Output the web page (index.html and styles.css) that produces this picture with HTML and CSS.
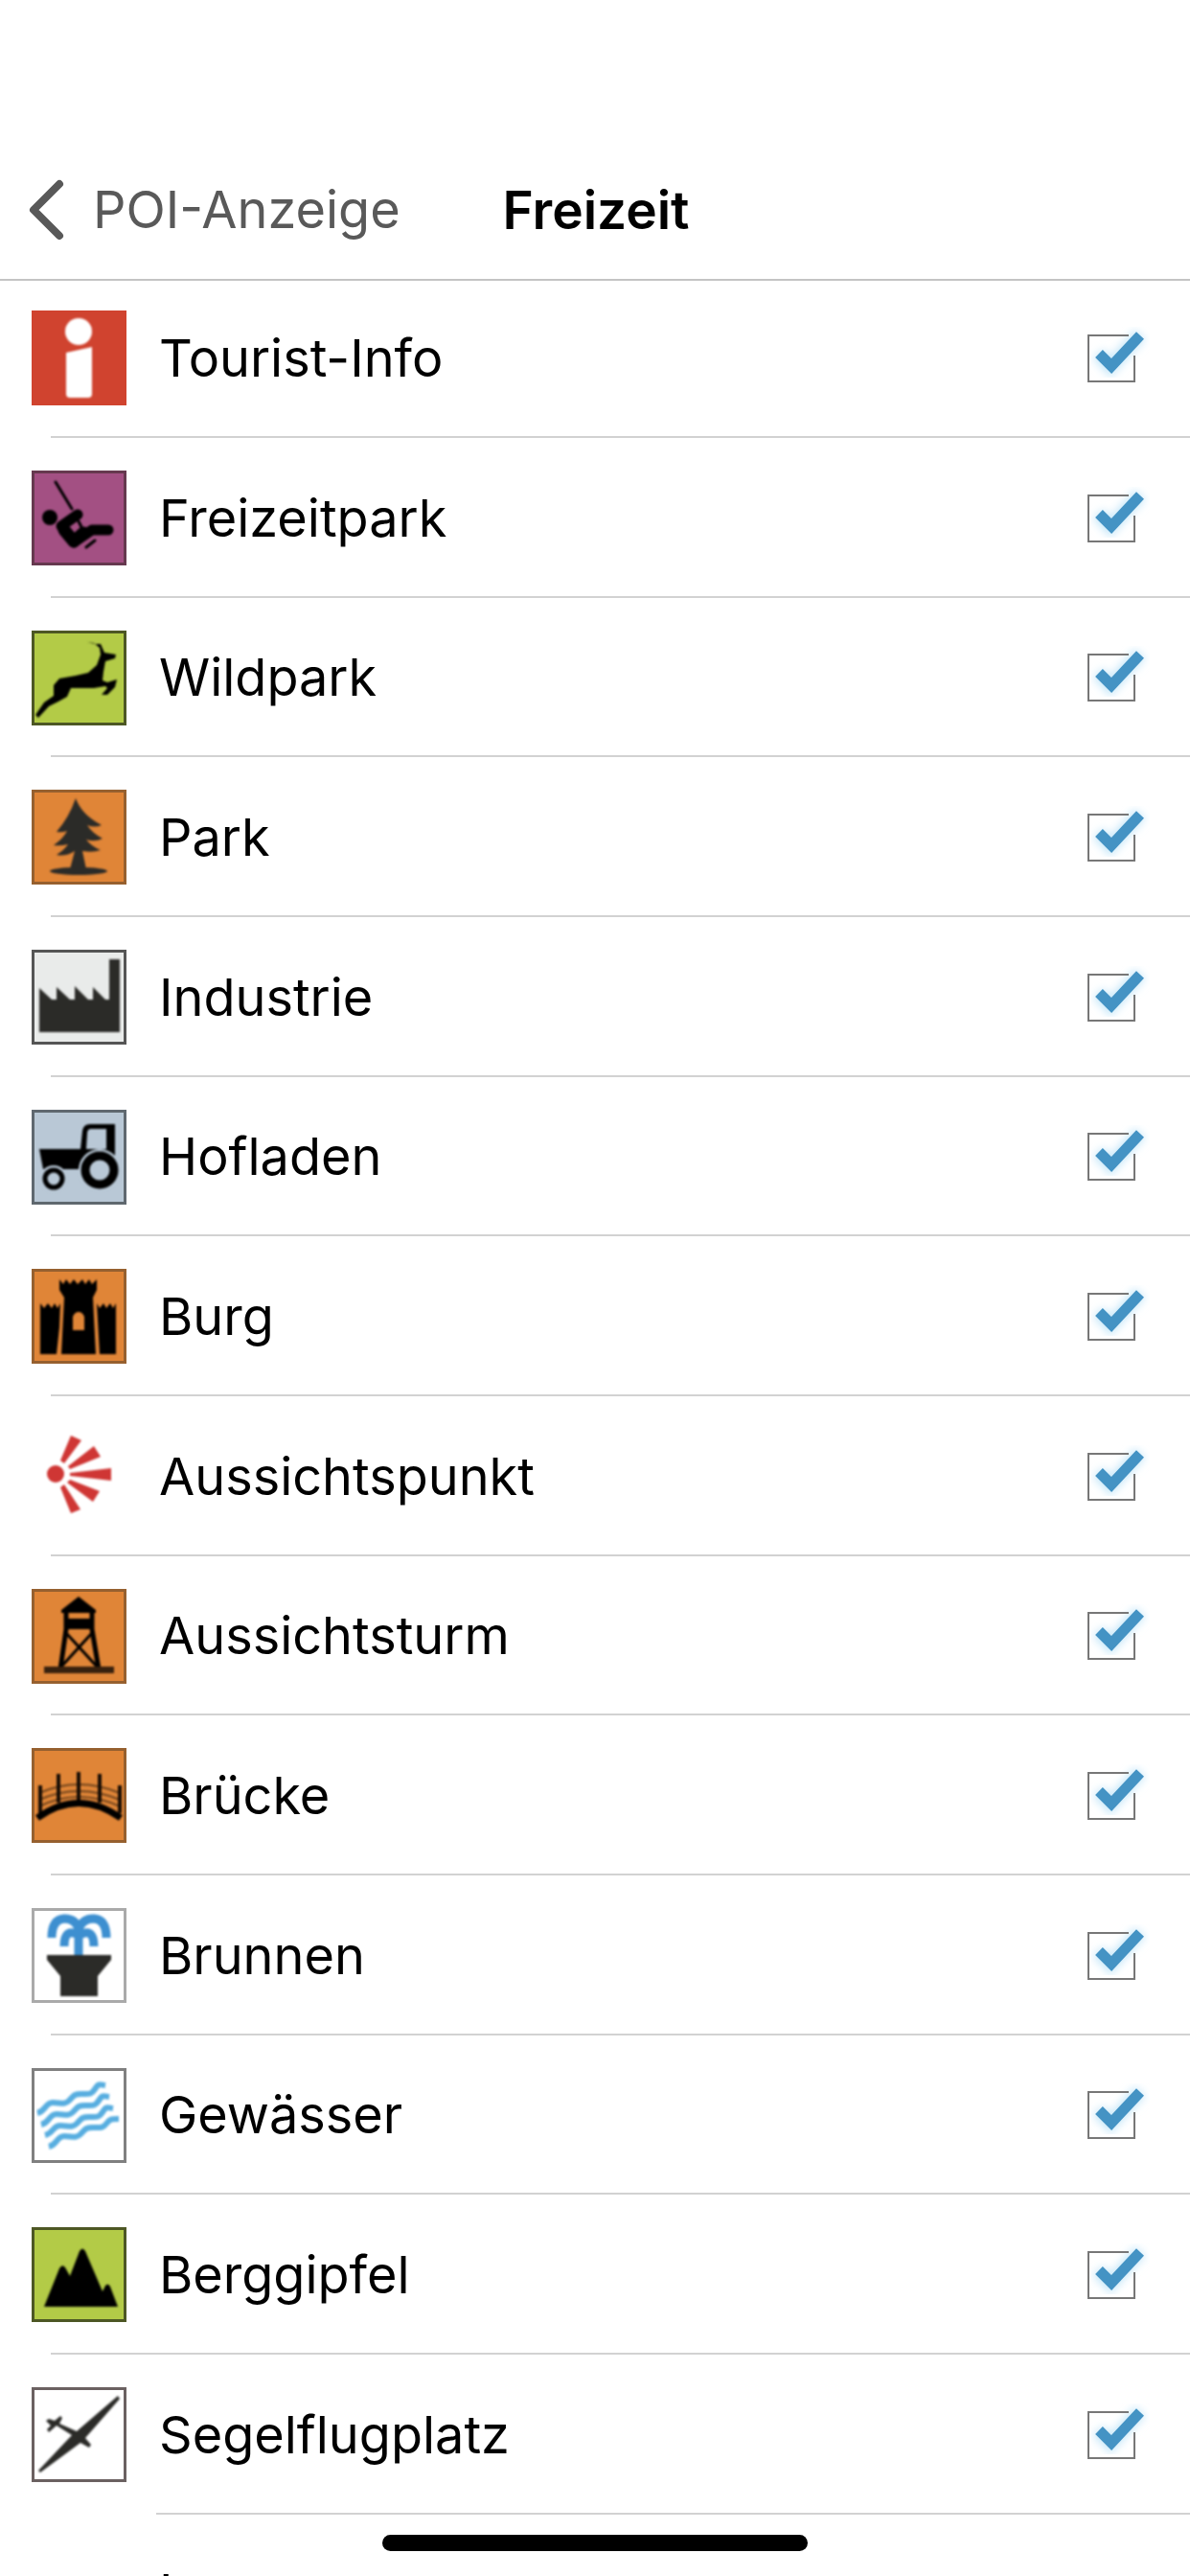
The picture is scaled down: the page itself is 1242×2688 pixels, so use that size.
FILE: index.html
```html
<!DOCTYPE html>
<html lang="de">
<head>
    <meta charset="UTF-8">
    <meta name="viewport" content="width=device-width, initial-scale=1.0">
    <title>Freizeit</title>
    <link rel="stylesheet" href="styles.css">
</head>
<body>
    <header class="navbar">
        <a class="back" href="#">
            <svg class="chevron" viewBox="0 0 37 64" aria-hidden="true"><path d="M32 5L5 32l27 27"/></svg>
            POI-Anzeige
        </a>
        <h1 class="title">Freizeit</h1>
    </header>

    <ul class="poi-list">
        <li class="poi">
            <svg class="icon" viewBox="0 0 99 99" aria-hidden="true">
                <rect width="99" height="99" fill="#d0432f"/>
                <g class="soft" fill="#fff"><circle cx="49" cy="22" r="14"/><path d="M36 44l27-6v49q0 4-4 4H40q-4 0-4-4z"/></g>
            </svg>
            <label for="tourist-info">Tourist-Info</label>
            <input type="checkbox" id="tourist-info" checked>
        </li>
        <li class="poi">
            <svg class="icon" viewBox="0 0 99 99" aria-hidden="true">
                <rect width="99" height="99" fill="#a35083"/>
                <rect class="frame" x="1" y="1" width="97" height="97" stroke="#66394f"/>
                <g class="soft" fill="none" stroke="#000" stroke-linecap="round" stroke-linejoin="round">
                    <path d="M25 12l17 28" stroke-width="3"/>
                    <circle cx="19" cy="49" r="8" fill="#000" stroke="none"/>
                    <path d="M48 46L31 58l13 17 19-13h17" stroke-width="11"/>
                    <path d="M34 62l10 12 10-9" stroke-width="13"/>
                    <path d="M49 53l3 6M57 80l9-7" stroke-width="3"/>
                </g>
            </svg>
            <label for="freizeitpark">Freizeitpark</label>
            <input type="checkbox" id="freizeitpark" checked>
        </li>
        <li class="poi">
            <svg class="icon" viewBox="0 0 99 99" aria-hidden="true">
                <rect width="99" height="99" fill="#b3cb47"/>
                <rect class="frame" x="1" y="1" width="97" height="97" stroke="#4d5724"/>
                <g class="soft"><path d="M58 12l8 2 6 0 4 9 12 2-1 4-10 3-2 11-1 9 5 2 10-3-2 8-8 8-6 0 6-7-2-2-12 2-24 0-4 9-9 5-10 5-11 12-3-3 9-13 10-7 0-11 6-7 17-3 13-3 9-8 4-11-1-7-6-5z"/></g>
            </svg>
            <label for="wildpark">Wildpark</label>
            <input type="checkbox" id="wildpark" checked>
        </li>
        <li class="poi">
            <svg class="icon" viewBox="0 0 99 99" aria-hidden="true">
                <rect width="99" height="99" fill="#e08537"/>
                <rect class="frame" x="1" y="1" width="97" height="97" stroke="#96602f"/>
                <g class="soft" fill="#2b2b28">
                    <path d="M46 9Q52 26 73 37Q66 40 58 37Q63 45 74 51Q66 55 57 52Q62 59 72 63Q64 66 53 64L57 83H40L45 64Q36 70 26 68Q34 63 38 57Q30 59 23 58Q33 51 37 43Q32 45 26 44Q39 29 46 9z"/>
                    <ellipse cx="49" cy="85" rx="30" ry="4"/>
                </g>
            </svg>
            <label for="park">Park</label>
            <input type="checkbox" id="park" checked>
        </li>
        <li class="poi">
            <svg class="icon" viewBox="0 0 99 99" aria-hidden="true">
                <rect width="99" height="99" fill="#e9ebea"/>
                <rect class="frame" x="1" y="1" width="97" height="97" stroke="#555"/>
                <g class="soft"><path fill="#2b2b28" d="M8 86V40l13 12h5V39l14 13h5V38l14 14h5V39l13 13h4V10h11v76z"/></g>
            </svg>
            <label for="industrie">Industrie</label>
            <input type="checkbox" id="industrie" checked>
        </li>
        <li class="poi">
            <svg class="icon" viewBox="0 0 99 99" aria-hidden="true">
                <rect width="99" height="99" fill="#b9c8d6"/>
                <rect class="frame" x="1" y="1" width="97" height="97" stroke="#5f686f"/>
                <g class="soft">
                    <path d="M8 41H51L53 22Q54 15 61 15H87V48L84 60 52 62H12zM57 41h21V20H62q-4 0-4 5z" fill-rule="evenodd"/>
                    <circle cx="23" cy="72" r="14" fill="#b9c8d6"/>
                    <circle cx="71" cy="63" r="22" fill="#b9c8d6"/>
                    <circle cx="23" cy="72" r="9" fill="none" stroke="#000" stroke-width="5"/>
                    <circle cx="71" cy="63" r="15" fill="none" stroke="#000" stroke-width="9"/>
                </g>
            </svg>
            <label for="hofladen">Hofladen</label>
            <input type="checkbox" id="hofladen" checked>
        </li>
        <li class="poi">
            <svg class="icon" viewBox="0 0 99 99" aria-hidden="true">
                <rect width="99" height="99" fill="#e08537"/>
                <rect class="frame" x="1" y="1" width="97" height="97" stroke="#96602f"/>
                <g class="soft">
                    <path d="M29 11l4 5 3-5 4 5 4-5 4 5 5-5 3 5 4-5 3 5 5-5v11l-4 8 3 59H31l3-59-5-8z"/>
                    <path d="M9 36l4 5 4-5 4 5 3-5 3 5 3-5-1 25-3 28H9zM68 36l3 5 4-5 3 5 4-5 3 5 3-5v53H71z"/>
                    <path fill="#e08537" d="M43 64V50q2-5 6-5t6 5v14z"/>
                </g>
            </svg>
            <label for="burg">Burg</label>
            <input type="checkbox" id="burg" checked>
        </li>
        <li class="poi">
            <svg class="icon" viewBox="0 0 99 99" aria-hidden="true">
                <g class="soft" fill="#cf3634">
                    <circle cx="25" cy="47" r="9"/>
                    <path d="M30 33L41 7l11 5-18 24zM38 39L65 18l7 11-32 13zM40 46l43-5v13l-43-5zM40 53l31 12-7 11-27-20zM34 58l17 26-10 4-11-27z"/>
                </g>
            </svg>
            <label for="aussichtspunkt">Aussichtspunkt</label>
            <input type="checkbox" id="aussichtspunkt" checked>
        </li>
        <li class="poi">
            <svg class="icon" viewBox="0 0 99 99" aria-hidden="true">
                <rect width="99" height="99" fill="#e08537"/>
                <rect class="frame" x="1" y="1" width="97" height="97" stroke="#96602f"/>
                <g class="soft">
                    <path d="M31 22L49 8l18 14v3H31zM36 31h28v11H36z"/>
                    <path d="M36 22v20l-6 42M63 22v20l7 42" fill="none" stroke="#000" stroke-width="5"/>
                    <path d="M36 46l33 36M63 46L32 80" fill="none" stroke="#000" stroke-width="3"/>
                    <path fill="#38210e" d="M13 81h73v7H13z"/>
                </g>
            </svg>
            <label for="aussichtsturm">Aussichtsturm</label>
            <input type="checkbox" id="aussichtsturm" checked>
        </li>
        <li class="poi">
            <svg class="icon" viewBox="0 0 99 99" aria-hidden="true">
                <rect width="99" height="99" fill="#e08537"/>
                <rect class="frame" x="1" y="1" width="97" height="97" stroke="#96602f"/>
                <g class="soft" fill="none" stroke="#170d05">
                    <path d="M8 47Q49 29 92 47M8 54Q49 36 92 54M8 61Q49 41 92 61" stroke="#70431c" stroke-width="2"/>
                    <path d="M9 39v29M28 27v30M49 25v30M71 27v30M92 39v29" stroke-width="4"/>
                    <path d="M6 73Q49 42 93 73" stroke="#000" stroke-width="7"/>
                </g>
            </svg>
            <label for="bruecke">Brücke</label>
            <input type="checkbox" id="bruecke" checked>
        </li>
        <li class="poi">
            <svg class="icon" viewBox="0 0 99 99" aria-hidden="true">
                <rect width="99" height="99" fill="#fff"/>
                <rect class="frame" x="1" y="1" width="97" height="97" stroke="#aaa"/>
                <g class="soft">
                    <path d="M49 50V22Q46 11 34 11Q21 12 21 31M49 22Q53 11 65 11Q78 12 78 31M49 28Q34 20 34 40M50 28Q65 20 65 40" fill="none" stroke="#3d8fd0" stroke-width="9"/>
                    <path fill="#2b2b28" d="M16 49h67v5L69 71v21H30V71L16 54z"/>
                </g>
            </svg>
            <label for="brunnen">Brunnen</label>
            <input type="checkbox" id="brunnen" checked>
        </li>
        <li class="poi">
            <svg class="icon" viewBox="0 0 99 99" aria-hidden="true">
                <rect width="99" height="99" fill="#fff"/>
                <rect class="frame" x="1" y="1" width="97" height="97" stroke="#808080"/>
                <g class="soft" fill="none" stroke="#58aee0" stroke-width="6">
                    <path d="M6 47C15 45 14 36 22 36S34 39 39 34S44 27 52 27S62 28 66 22S70 17 77 18"/>
                    <path d="M10 59C19 57 18 48 26 48S38 51 43 46S48 39 56 39S66 40 70 34S74 29 81 30"/>
                    <path d="M14 70C23 68 22 60 30 60S42 63 47 58S52 51 60 51S70 52 74 46S78 41 85 42"/>
                    <path d="M18 82C27 80 26 71 34 71S46 74 51 69S56 62 64 62S74 63 78 58S83 53 91 53"/>
                </g>
            </svg>
            <label for="gewaesser">Gewässer</label>
            <input type="checkbox" id="gewaesser" checked>
        </li>
        <li class="poi">
            <svg class="icon" viewBox="0 0 99 99" aria-hidden="true">
                <rect width="99" height="99" fill="#b3cb47"/>
                <rect class="frame" x="1" y="1" width="97" height="97" stroke="#4d5724"/>
                <g class="soft"><path d="M13 83l16-40q3-5 6-1l5 9 10-26q3-5 6 0l18 42 3-6q3-3 5 1l8 21z"/></g>
            </svg>
            <label for="berggipfel">Berggipfel</label>
            <input type="checkbox" id="berggipfel" checked>
        </li>
        <li class="poi">
            <svg class="icon" viewBox="0 0 99 99" aria-hidden="true">
                <rect width="99" height="99" fill="#fff"/>
                <rect class="frame" x="1" y="1" width="97" height="97" stroke="#6b6161"/>
                <g class="soft" fill="#2b2b28">
                    <path d="M90 9l2 3-36 41 6 7-2 3-9-5L9 89l-2-2 35-37-16-10-8 7-2-3 4-4-5-5 3-2 6 2 6-5 2 2-3 6 18 8z"/>
                </g>
            </svg>
            <label for="segelflugplatz">Segelflugplatz</label>
            <input type="checkbox" id="segelflugplatz" checked>
        </li>
    </ul>
    <div class="next-group">I</div>

    <div class="home-indicator"></div>
</body>
</html>
```
FILE: styles.css
```css
* {
    box-sizing: border-box;
}
body {
    margin: 0;
    background-color: #fff;
    color: #000;
    font-family: Inter, "Liberation Sans", sans-serif;
    font-size: 54px;
    line-height: 68px;
}
.navbar {
    display: grid;
    grid-template-columns: 1fr auto 1fr;
    align-items: center;
    padding: 146px 28px 0 30px;
    height: 293px;
    border-bottom: 2px solid #c4c4c4;
}
.back {
    display: flex;
    align-items: center;
    gap: 30px;
    color: #595959;
    text-decoration: none;
}
.chevron {
    width: 37px;
    height: 64px;
    fill: none;
    stroke: #595959;
    stroke-width: 8;
    stroke-linecap: round;
    stroke-linejoin: round;
}
.title {
    margin: 0;
    font-size: 55px;
    font-weight: 600;
}
.poi-list {
    margin: -3px 0 0;
    padding: 0;
    list-style: none;
}
.poi {
    display: flex;
    align-items: center;
    gap: 34px;
    height: 167px;
    padding: 0 42px 0 33px;
    background: linear-gradient(#d2d2d2, #d2d2d2) 53px 100% / 100% 2px no-repeat;
}
.poi:nth-child(3n) {
    height: 166px;
}
.poi:last-child {
    background-position: 163px 100%;
}
.poi label {
    flex: 1;
}
.icon {
    width: 99px;
    height: 99px;
}
.frame {
    fill: none;
    stroke-width: 4;
}
/* the POI symbols are slightly soft */
.soft {
    filter: blur(1px);
}
.poi input {
    appearance: none;
    width: 66px;
    height: 66px;
    margin: 0;
    border: 2px solid #777;
}
.poi input:checked {
    border: 0;
    background: url("data:image/svg+xml,%3Csvg xmlns='http://www.w3.org/2000/svg' viewBox='0 0 66 66'%3E%3Cdefs%3E%3Cfilter id='g' x='-30%25' y='-30%25' width='160%25' height='160%25'%3E%3CfeGaussianBlur stdDeviation='4'/%3E%3C/filter%3E%3C/defs%3E%3Cpath d='M12 28l13 14 31-34' fill='none' stroke='%23c8e8f9' stroke-width='15' filter='url(%23g)'/%3E%3Cpath d='M44 9H2v48h48V30' fill='none' stroke='%23777' stroke-width='2'/%3E%3Cpath d='M13 28l13 13 30-32' fill='none' stroke='%234493c4' stroke-width='11'/%3E%3C/svg%3E") center / contain no-repeat;
}
/* following entry, cut off by the lower edge */
.next-group {
    height: 64px;
    padding: 48px 0 0 166px;
    overflow: hidden;
}
.home-indicator {
    position: fixed;
    left: 50%;
    bottom: 26px;
    width: 444px;
    height: 17px;
    margin-left: -222px;
    border-radius: 9px;
    background-color: #000;
}
```
